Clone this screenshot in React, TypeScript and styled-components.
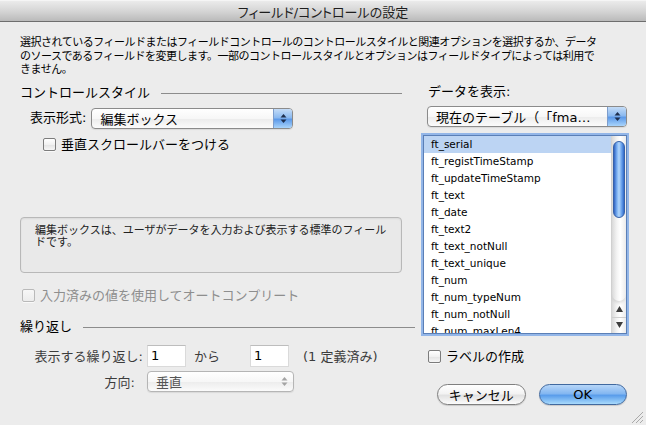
import React from "react";
import styled, { createGlobalStyle } from "styled-components";

const FONT = `"DejaVu Sans", "Noto Sans CJK JP", sans-serif`;

const GlobalStyle = createGlobalStyle`
  html, body {
    margin: 0;
    padding: 0;
    background: #ececec;
  }
  body {
    font-family: ${FONT};
    color: #000;
  }
  * {
    box-sizing: border-box;
  }
`;

const fields = [
  "ft_serial",
  "ft_registTimeStamp",
  "ft_updateTimeStamp",
  "ft_text",
  "ft_date",
  "ft_text2",
  "ft_text_notNull",
  "ft_text_unique",
  "ft_num",
  "ft_num_typeNum",
  "ft_num_notNull",
  "ft_num_maxLen4",
];

const Window = styled.div`
  position: relative;
  width: 646px;
  height: 425px;
  overflow: hidden;
  background: #ececec;
  display: flex;
  flex-direction: column;
`;

const TitleBar = styled.div`
  flex: none;
  height: 22px;
  display: flex;
  align-items: center;
  justify-content: center;
  background: linear-gradient(#ebebeb, #d3d3d3 55%, #bababa);
  border-top: 1px solid #f5f5f5;
  border-bottom: 1px solid #6e6e6e;
  font-size: 13px;
  color: #1e1e1e;
  font-feature-settings: "palt";
`;

const Body = styled.div`
  padding: 14px 19px 0 20px;
`;

const Intro = styled.p`
  margin: 0;
  font-size: 11px;
  line-height: 13.6px;
  letter-spacing: -0.5px;
  white-space: nowrap;
`;

const Columns = styled.div`
  margin-top: 7px;
  display: grid;
  grid-template-columns: 395px 204px;
  column-gap: 8px;
`;

const Column = styled.div`
  display: flex;
  flex-direction: column;
`;

const SectionHeader = styled.div<{ $trim?: number; $top?: number }>`
  height: 16px;
  margin-top: ${(p) => p.$top ?? 0}px;
  padding-right: ${(p) => p.$trim ?? 0}px;
  display: flex;
  align-items: center;
  gap: 11px;
  font-size: 13px;

  &::after {
    content: "";
    flex: 1;
    height: 1px;
    margin-top: 4px;
    background: #8c8c8c;
  }
`;

const Row = styled.div<{ $top: number; $indent?: number; $gap?: number }>`
  display: flex;
  align-items: center;
  min-height: 16px;
  margin-top: ${(p) => p.$top}px;
  padding-left: ${(p) => p.$indent ?? 0}px;
  gap: ${(p) => p.$gap ?? 5}px;
`;

const Label = styled.span<{ $muted?: boolean }>`
  font-size: 13px;
  line-height: 16px;
  white-space: nowrap;
  color: ${(p) => (p.$muted ? "#8e8e8e" : "#000")};
`;

const CheckBox = styled.span<{ $disabled?: boolean }>`
  flex: none;
  width: 13px;
  height: 13px;
  border-radius: 2px;
  border: 1px solid ${(p) => (p.$disabled ? "#b9b9b9" : "#7c7c7c")};
  background: ${(p) =>
    p.$disabled
      ? "linear-gradient(#f7f7f7, #ececec)"
      : "linear-gradient(#ffffff, #f1f1f1 50%, #e4e4e4 55%, #f6f6f6)"};
  box-shadow: 0 1px 0 rgba(255, 255, 255, 0.7);
`;

const PopupBox = styled.div<{ $width: number; $disabled?: boolean }>`
  flex: none;
  width: ${(p) => p.$width}px;
  height: 21px;
  display: flex;
  border: 1px solid ${(p) => (p.$disabled ? "#b5b5b5" : "#8b8b8b")};
  border-radius: 4px;
  overflow: hidden;
  background: linear-gradient(#ffffff, #f7f7f7 50%, #ededed 55%, #fbfbfb);
  box-shadow: 0 1px 1px rgba(0, 0, 0, 0.08);
`;

const PopupText = styled.span<{ $disabled?: boolean }>`
  flex: 1;
  display: flex;
  align-items: center;
  padding-left: 8px;
  overflow: hidden;
  white-space: nowrap;
  font-size: 13px;
  text-spacing-trim: space-all;
  color: ${(p) => (p.$disabled ? "#555" : "#000")};
`;

const PopupCap = styled.span<{ $disabled?: boolean }>`
  flex: none;
  width: 19px;
  display: flex;
  align-items: center;
  justify-content: center;
  border-left: 1px solid ${(p) => (p.$disabled ? "transparent" : "#7d9dcc")};
  background: ${(p) =>
    p.$disabled
      ? "transparent"
      : "linear-gradient(#c4dcf7, #8cbaf0 45%, #5d9ae9 55%, #a9d4fb)"};
`;

const Popup = ({
  width,
  value,
  disabled,
}: {
  width: number;
  value: string;
  disabled?: boolean;
}) => (
  <PopupBox $width={width} $disabled={disabled}>
    <PopupText $disabled={disabled}>{value}</PopupText>
    <PopupCap $disabled={disabled}>
      <svg width="7" height="11" viewBox="0 0 7 11">
        <polygon
          points="0.5,4.5 3.5,1 6.5,4.5"
          fill={disabled ? "#a4a4a4" : "#1e2f4e"}
        />
        <polygon
          points="0.5,6.5 3.5,10 6.5,6.5"
          fill={disabled ? "#a4a4a4" : "#1e2f4e"}
        />
      </svg>
    </PopupCap>
  </PopupBox>
);

const InfoBox = styled.div`
  margin-top: 64px;
  margin-right: 13px;
  height: 56px;
  padding: 7px 14px;
  border: 1px solid #b8b8b8;
  border-radius: 4px;
  background: #e9e9e9;
  box-shadow: inset 0 1px 2px rgba(0, 0, 0, 0.07);
  font-size: 11px;
  line-height: 12px;
  color: #222;
  white-space: nowrap;
`;

const FormGrid = styled.div`
  margin-top: 11px;
  display: grid;
  grid-template-columns: 127px auto;
  row-gap: 4px;
  align-items: center;
`;

const FormLabel = styled.span<{ $gap: number }>`
  justify-self: end;
  padding-right: ${(p) => p.$gap}px;
  font-size: 13px;
  color: #3c3c3c;
  white-space: nowrap;
`;

const RepeatRow = styled.div`
  display: flex;
  align-items: center;
  font-size: 13px;
  color: #3c3c3c;
  white-space: nowrap;
`;

const NumberField = styled.span<{ $after: number }>`
  width: 39px;
  height: 22px;
  display: flex;
  align-items: center;
  padding-left: 3px;
  margin-right: ${(p) => p.$after}px;
  background: #fff;
  border: 1px solid #dadada;
  border-top-color: #bdbdbd;
  font-size: 13px;
  color: #000;
`;

const FieldText = styled.span<{ $after?: number }>`
  margin-right: ${(p) => p.$after ?? 0}px;
`;

const ListFrame = styled.div`
  margin-top: 8px;
  height: 199px;
  display: flex;
  background: #fff;
  border: 1px solid #5b7fb6;
  box-shadow: 0 0 0 2px #93b6e8;
  overflow: hidden;
`;

const ListItems = styled.ul`
  flex: 1;
  margin: 0;
  padding: 0;
  list-style: none;
  overflow: hidden;
`;

const ListItem = styled.li<{ $selected?: boolean }>`
  height: 17px;
  line-height: 17px;
  padding-left: 7px;
  font-size: 10.5px;
  white-space: nowrap;
  background: ${(p) => (p.$selected ? "#bcd4f3" : "transparent")};
`;

const ScrollBar = styled.div`
  flex: none;
  width: 15px;
  display: flex;
  flex-direction: column;
  border-left: 1px solid #d4d4d4;
  background: linear-gradient(to right, #d9d9d9, #f4f4f4 35%, #ffffff 60%, #ebebeb);
`;

const Track = styled.div`
  flex: 1;
  padding: 5px 1px 0 1px;
  border-bottom-left-radius: 7px;
  border-bottom-right-radius: 7px;
  box-shadow: 0 3px 3px -1px rgba(0, 0, 0, 0.12);
`;

const Thumb = styled.div`
  height: 77px;
  border-radius: 6px;
  border: 1px solid #3661a8;
  background: linear-gradient(
    to right,
    #2f63c2,
    #7db2f3 30%,
    #b3d7fb 50%,
    #6ba3ec 75%,
    #3069c9
  );
`;

const ArrowButton = styled.div<{ $down?: boolean }>`
  height: 16px;
  display: flex;
  align-items: center;
  justify-content: center;
  border-top: 1px solid ${(p) => (p.$down ? "#cfcfcf" : "transparent")};
`;

const Buttons = styled.div`
  margin-top: 19px;
  padding-left: 14px;
  display: flex;
  gap: 13px;
`;

const PushButton = styled.button<{ $default?: boolean }>`
  width: 89px;
  height: 21px;
  padding: 0;
  border-radius: 11px;
  border: 1px solid ${(p) => (p.$default ? "#41699f" : "#7f7f7f")};
  background: ${(p) =>
    p.$default
      ? "linear-gradient(#b7d6f8, #84b7f1 45%, #5a9deb 55%, #a8dafc)"
      : "linear-gradient(#ffffff, #f3f3f3 45%, #e2e2e2 55%, #fbfbfb)"};
  box-shadow: 0 1px 1px rgba(0, 0, 0, 0.15);
  font-family: ${FONT};
  font-size: 13px;
  color: #000;
`;

const Grip = styled.svg`
  position: absolute;
  right: 3px;
  bottom: 2px;
`;

export default function App() {
  return (
    <>
      <GlobalStyle />
      <Window>
        <TitleBar>フィールド/コントロールの設定</TitleBar>
        <Body>
          <Intro>
            選択されているフィールドまたはフィールドコントロールのコントロールスタイルと関連オプションを選択するか、データ
            <br />
            のソースであるフィールドを変更します。一部のコントロールスタイルとオプションはフィールドタイプによっては利用で
            <br />
            きません。
          </Intro>
          <Columns>
            <Column>
              <SectionHeader $trim={13}>コントロールスタイル</SectionHeader>
              <Row $top={8} $indent={10}>
                <Label>表示形式:</Label>
                <Popup width={202} value="編集ボックス" />
              </Row>
              <Row $top={8} $indent={23}>
                <CheckBox />
                <Label>垂直スクロールバーをつける</Label>
              </Row>
              <InfoBox>
                編集ボックスは、ユーザがデータを入力および表示する標準のフィール
                <br />
                ドです。
              </InfoBox>
              <Row $top={15} $indent={2}>
                <CheckBox $disabled />
                <Label $muted>入力済みの値を使用してオートコンプリート</Label>
              </Row>
              <SectionHeader $top={14}>繰り返し</SectionHeader>
              <FormGrid>
                <FormLabel $gap={4}>表示する繰り返し:</FormLabel>
                <RepeatRow>
                  <NumberField $after={8}>1</NumberField>
                  <FieldText $after={30}>から</FieldText>
                  <NumberField $after={14}>1</NumberField>
                  <FieldText>(1 定義済み)</FieldText>
                </RepeatRow>
                <FormLabel $gap={12}>方向:</FormLabel>
                <Popup width={147} value="垂直" disabled />
              </FormGrid>
            </Column>
            <Column>
              <Row $top={0} $indent={5}>
                <Label>データを表示:</Label>
              </Row>
              <Row $top={6} $indent={4}>
                <Popup width={200} value="現在のテーブル（「fma…" />
              </Row>
              <ListFrame>
                <ListItems>
                  {fields.map((name, i) => (
                    <ListItem key={name} $selected={i === 0}>
                      {name}
                    </ListItem>
                  ))}
                </ListItems>
                <ScrollBar>
                  <Track>
                    <Thumb />
                  </Track>
                  <ArrowButton>
                    <svg width="7" height="6" viewBox="0 0 7 6">
                      <polygon points="0,6 3.5,0 7,6" fill="#3d3d3d" />
                    </svg>
                  </ArrowButton>
                  <ArrowButton $down>
                    <svg width="7" height="6" viewBox="0 0 7 6">
                      <polygon points="0,0 3.5,6 7,0" fill="#3d3d3d" />
                    </svg>
                  </ArrowButton>
                </ScrollBar>
              </ListFrame>
              <Row $top={15} $indent={5}>
                <CheckBox />
                <Label>ラベルの作成</Label>
              </Row>
              <Buttons>
                <PushButton type="button">キャンセル</PushButton>
                <PushButton type="button" $default>
                  OK
                </PushButton>
              </Buttons>
            </Column>
          </Columns>
        </Body>
        <Grip width="12" height="12" viewBox="0 0 12 12">
          <line x1="1" y1="12" x2="12" y2="1" stroke="#a9a9a9" />
          <line x1="5" y1="12" x2="12" y2="5" stroke="#a9a9a9" />
          <line x1="9" y1="12" x2="12" y2="9" stroke="#a9a9a9" />
        </Grip>
      </Window>
    </>
  );
}
